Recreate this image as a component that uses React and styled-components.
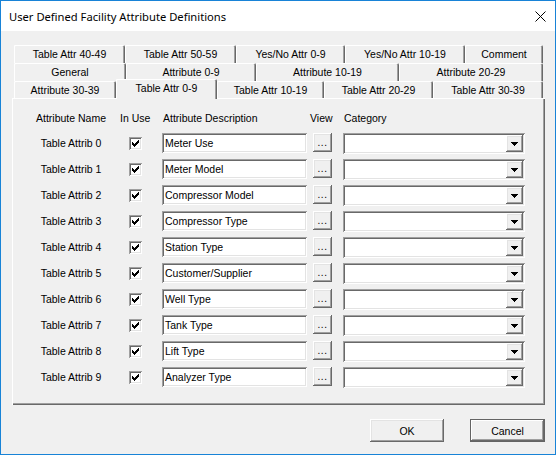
import React from 'react';
import styled, { createGlobalStyle } from 'styled-components';

const Global = createGlobalStyle`
  html, body { margin: 0; padding: 0; background: #fff; }
  * { box-sizing: border-box; }
`;

const raised = `
  box-shadow: inset -1px -1px #696969, inset 1px 1px #fff, inset -2px -2px #a0a0a0, inset 2px 2px #e3e3e3;
`;
const sunken = `
  box-shadow: inset 1px 1px #a0a0a0, inset -1px -1px #fff, inset 2px 2px #696969, inset -2px -2px #e3e3e3;
`;

const Window = styled.div`
  width: 556px;
  height: 455px;
  border: 1px solid #1883d7;
  display: flex;
  flex-direction: column;
  background: #f0f0f0;
  font-family: "Liberation Sans", Arial, sans-serif;
  font-size: 10.5px;
  color: #000;
`;

const TitleBar = styled.div`
  height: 30px;
  background: #fff;
  display: flex;
  align-items: center;
  justify-content: space-between;
  padding: 0 9px 0 8px;
`;

const Title = styled.span`
  font-family: "Noto Sans", "Liberation Sans", sans-serif;
  font-size: 11.2px;
  color: #000;
`;

const Body = styled.div`
  flex: 1;
  padding: 14px 10px 0 11px;
  display: flex;
  flex-direction: column;
`;

const TabStrip = styled.div`
  margin: 0 2px;
  display: flex;
  flex-direction: column;
`;

const TabRow = styled.div`
  display: flex;
  height: ${p => p.$h}px;
  align-items: flex-start;
`;

const Tab = styled.div`
  width: ${p => p.$w}px;
  height: ${p => (p.$selected ? p.$h + 3 : p.$h)}px;
  margin-top: ${p => (p.$selected ? -2 : 0)}px;
  flex: none;
  display: flex;
  align-items: center;
  justify-content: center;
  padding-bottom: ${p => (p.$selected ? 2 : 0)}px;
  background: #f0f0f0;
  border-top-right-radius: 2px;
  border-top-left-radius: 1px;
  box-shadow: inset 1px 1px #fff, inset -1px 0 #696969, inset -2px 0 #a0a0a0;
  white-space: nowrap;
  position: relative;
  z-index: ${p => (p.$selected ? 2 : 1)};
`;

const Panel = styled.div`
  height: 307px;
  padding: 11px 0 0 10px;
  box-shadow: inset 1px 1px #fff, inset -1px -1px #696969, inset -2px -2px #a0a0a0;
`;

const Grid = styled.div`
  display: grid;
  grid-template-columns: 98px 42px 151px 30px 182px;
  grid-template-rows: 18px repeat(10, 20px);
  row-gap: 6px;
  align-items: center;
`;

const Head = styled.div`
  white-space: nowrap;
  justify-self: ${p => p.$justify || 'start'};
  margin-left: ${p => p.$ml || 0}px;
`;

const Name = styled.div`
  justify-self: center;
  white-space: nowrap;
`;

const Check = styled.div`
  width: 13px;
  height: 13px;
  margin-left: 9px;
  background: #fff;
  ${sunken}
  display: flex;
  align-items: center;
  justify-content: center;
`;

const TextBox = styled.div`
  width: 145px;
  height: 20px;
  background: #fff;
  ${sunken}
  display: flex;
  align-items: center;
  padding-left: 3px;
  white-space: nowrap;
`;

const DotsButton = styled.div`
  width: 19px;
  height: 19px;
  align-self: start;
  background: #f0f0f0;
  ${raised}
  display: flex;
  align-items: flex-end;
  justify-content: center;
  padding-bottom: 4px;
  font-size: 10px;
  letter-spacing: 0.5px;
  line-height: 1;
`;

const Combo = styled.div`
  width: 182px;
  height: 21px;
  align-self: start;
  background: #fff;
  ${sunken}
  display: flex;
  justify-content: flex-end;
  padding: 2px;
`;

const DropButton = styled.div`
  width: 17px;
  height: 17px;
  background: #f0f0f0;
  ${raised}
  display: flex;
  align-items: center;
  justify-content: center;
`;

const Footer = styled.div`
  display: flex;
  justify-content: flex-end;
  gap: 26px;
  margin-top: 14px;
`;

const Button = styled.div`
  width: ${p => (p.$default ? 75 : 74)}px;
  height: 23px;
  display: flex;
  align-items: center;
  justify-content: center;
  background: #f0f0f0;
  box-shadow: ${p =>
    p.$default
      ? 'inset 0 0 0 1px #646464, inset -2px -2px #696969, inset 2px 2px #fff, inset -3px -3px #a0a0a0'
      : 'inset -1px -1px #696969, inset 1px 1px #fff, inset -2px -2px #a0a0a0, inset 2px 2px #e3e3e3'};
`;

const CloseIcon = () => (
  <svg width="11" height="11" viewBox="0 0 11 11">
    <path d="M0.5 0.5 L10.5 10.5 M10.5 0.5 L0.5 10.5" stroke="#000" strokeWidth="1" fill="none" />
  </svg>
);

const CheckMark = () => (
  <svg width="7" height="7" viewBox="0 0 7 7" shapeRendering="crispEdges">
    <path d="M0 2h1v1h1v1h1v-1h1v-1h1v-1h1v-1h1v3h-1v1h-1v1h-1v1h-1v1h-1v-1h-1v-1h-1v-1h-1z" fill="#000" />
  </svg>
);

const Arrow = () => (
  <svg width="7" height="4" viewBox="0 0 7 4" shapeRendering="crispEdges">
    <path d="M0 0h7v1h-1v1h-1v1h-1v1h-1v-1h-1v-1h-1v-1h-1z" fill="#000" />
  </svg>
);

const tabRows = [
  {
    h: 18,
    tabs: [
      { label: 'Table Attr 40-49', w: 111 },
      { label: 'Table Attr 50-59', w: 111 },
      { label: 'Yes/No Attr 0-9', w: 109 },
      { label: 'Yes/No Attr 10-19', w: 120 },
      { label: 'Comment', w: 78 },
    ],
  },
  {
    h: 18,
    tabs: [
      { label: 'General', w: 112 },
      { label: 'Attribute 0-9', w: 130 },
      { label: 'Attribute 10-19', w: 143 },
      { label: 'Attribute 20-29', w: 144 },
    ],
  },
  {
    h: 17,
    tabs: [
      { label: 'Attribute 30-39', w: 102 },
      { label: 'Table Attr 0-9', w: 101, selected: true },
      { label: 'Table Attr 10-19', w: 107 },
      { label: 'Table Attr 20-29', w: 109 },
      { label: 'Table Attr 30-39', w: 110 },
    ],
  },
];

const descriptions = [
  'Meter Use',
  'Meter Model',
  'Compressor Model',
  'Compressor Type',
  'Station Type',
  'Customer/Supplier',
  'Well Type',
  'Tank Type',
  'Lift Type',
  'Analyzer Type',
];

export default function App() {
  return (
    <>
      <Global />
      <Window>
        <TitleBar>
          <Title>User Defined Facility Attribute Definitions</Title>
          <CloseIcon />
        </TitleBar>
        <Body>
          <TabStrip>
            {tabRows.map((row, i) => (
              <TabRow key={i} $h={row.h}>
                {row.tabs.map(t => (
                  <Tab key={t.label} $w={t.w} $h={row.h} $selected={t.selected}>
                    {t.label}
                  </Tab>
                ))}
              </TabRow>
            ))}
          </TabStrip>
          <Panel>
            <Grid>
              <Head $justify="center">Attribute Name</Head>
              <Head>In Use</Head>
              <Head $ml={1}>Attribute Description</Head>
              <Head $ml={-3}>View</Head>
              <Head $ml={1}>Category</Head>
              {descriptions.map((d, i) => (
                <React.Fragment key={i}>
                  <Name>Table Attrib {i}</Name>
                  <Check>
                    <CheckMark />
                  </Check>
                  <TextBox>{d}</TextBox>
                  <DotsButton>...</DotsButton>
                  <Combo>
                    <DropButton>
                      <Arrow />
                    </DropButton>
                  </Combo>
                </React.Fragment>
              ))}
            </Grid>
          </Panel>
          <Footer>
            <Button>OK</Button>
            <Button $default>Cancel</Button>
          </Footer>
        </Body>
      </Window>
    </>
  );
}
